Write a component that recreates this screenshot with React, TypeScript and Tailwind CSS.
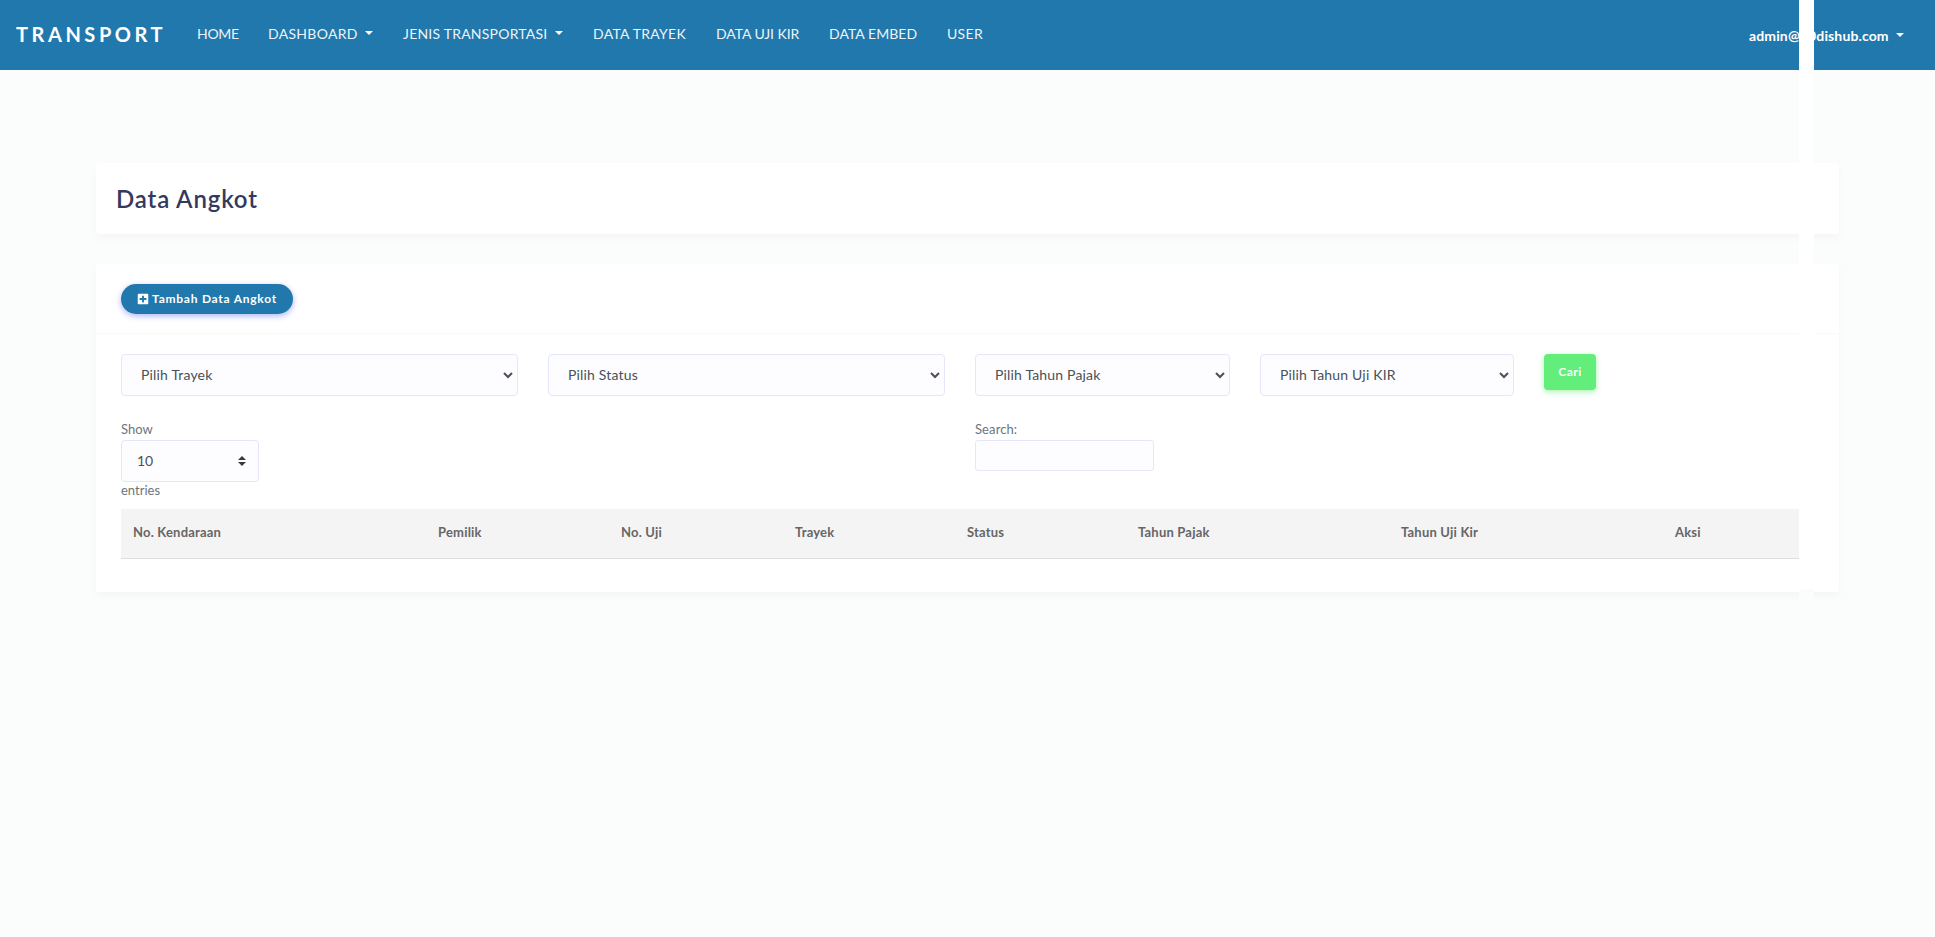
import { FaPlusSquare } from "react-icons/fa"

const navItems = [
  { label: "HOME", className: "w-[41px] mr-[30px] tracking-[-0.3px]" },
  { label: "DASHBOARD", className: "w-[105px] mr-[30px] tracking-[0.3px]", caret: true },
  { label: "JENIS TRANSPORTASI", className: "w-[160px] mr-[30px] tracking-[0.22px]", caret: true },
  { label: "DATA TRAYEK", className: "w-[93px] mr-[30px] tracking-[0.28px]" },
  { label: "DATA UJI KIR", className: "w-[83px] mr-[30px] tracking-[-0.07px]" },
  { label: "DATA EMBED", className: "w-[88px] mr-[30px] tracking-[0.05px]" },
  { label: "USER", className: "w-[37px] tracking-[0.3px]" },
]

const filters = [
  { label: "Pilih Trayek", className: "w-[397px]" },
  { label: "Pilih Status", className: "w-[397px]" },
  { label: "Pilih Tahun Pajak", className: "w-[255px]" },
  { label: "Pilih Tahun Uji KIR", className: "w-[254px]" },
]

const columns = [
  { label: "No. Kendaraan", className: "w-[305px]" },
  { label: "Pemilik", className: "w-[183px]" },
  { label: "No. Uji", className: "w-[174px]" },
  { label: "Trayek", className: "w-[172px]" },
  { label: "Status", className: "w-[171px]" },
  { label: "Tahun Pajak", className: "w-[263px]" },
  { label: "Tahun Uji Kir", className: "w-[274px]" },
  { label: "Aksi", className: "w-[136px]" },
]

function Caret() {
  return <span className="mb-[3px] border-x-4 border-t-4 border-x-transparent border-t-white" />
}

function Navbar() {
  return (
    <nav className="flex h-[70px] items-start bg-[#2078ad] pl-4 text-white">
      <div className="mt-[19px] w-[181px] text-[20px] leading-[30px] font-bold tracking-[3.55px]">TRANSPORT</div>
      <div className="flex pt-[23px] text-[14px] leading-[22px]">
        {navItems.map(item => (
          <a
            key={item.label}
            href="#"
            className={`flex items-center justify-between whitespace-nowrap text-[#edf4f8] ${item.className}`}
          >
            {item.label}
            {item.caret && <Caret />}
          </a>
        ))}
      </div>
      <a
        href="#"
        className="mt-[25px] mr-[31px] ml-auto flex w-[155px] items-center justify-between text-[14px] leading-[22px] font-bold tracking-[0.13px]"
      >
        admin@00dishub.com
        <Caret />
      </a>
    </nav>
  )
}

function FilterSelect({ label, className }: { label: string, className: string }) {
  return (
    <div
      className={`flex h-[42px] items-center justify-between rounded-[4px] border border-[#e4e6fc] bg-[#fdfdff] pr-[4px] pl-[19px] text-[14px] text-[#495057] ${className}`}
    >
      <span className="pb-[2px] tracking-[0.17px]">{label}</span>
      <svg width="10" height="7" viewBox="0 0 10 7" fill="none" stroke="#495057" strokeWidth="2">
        <path d="M1 1l4 4 4-4" />
      </svg>
    </div>
  )
}

export default function App() {
  return (
    <div className="relative h-[937px] overflow-hidden bg-[#fbfdfc] font-['Lato',sans-serif]">
      <Navbar />

      <main className="mx-24 mt-[93px]">
        <div className="h-[71px] rounded-[3px] bg-white px-5 pt-[19px] shadow-[0_4px_8px_rgba(0,0,0,0.03)]">
          <h1 className="text-[24px] leading-[34px] font-semibold tracking-[0.85px] text-[#34395e]">Data Angkot</h1>
        </div>

        <div className="mt-[30px] h-[328px] rounded-[3px] bg-white shadow-[0_4px_8px_rgba(0,0,0,0.03)]">
          <div className="flex h-[70px] items-start border-b border-[#f9f9f9] px-[25px] pt-5">
            <button className="flex h-[30px] w-[172px] items-center justify-center gap-[3px] rounded-full bg-[#2078ad] text-[12px] font-bold tracking-[0.75px] whitespace-nowrap text-white shadow-[0_2px_6px_#acb5f6]">
              <FaPlusSquare className="size-3" />
              Tambah Data Angkot
            </button>
          </div>

          <div className="px-[25px] pt-5">
            <div className="flex gap-[30px]">
              {filters.map(filter => (
                <FilterSelect key={filter.label} {...filter} />
              ))}
              <button className="h-9 w-[52px] rounded-[4px] bg-[#63ed7a] text-[12px] font-bold tracking-[0.5px] text-white shadow-[0_2px_6px_#a8f5b4]">
                Cari
              </button>
            </div>

            <div className="mt-[23px] flex h-[90px] text-[13px] leading-5 text-[#6c757d]">
              <div className="w-[854px]">
                <div>Show</div>
                <div className="mt-px flex h-[42px] w-[138px] items-center justify-between rounded-[4px] border border-[#e4e6fc] bg-[#fdfdff] pr-3 pl-[15px] text-[14px] text-[#495057]">
                  10
                  <svg width="8" height="10" viewBox="0 0 8 10" fill="#343a40">
                    <path d="M4 0L8 4H0zM4 10L0 6h8z" />
                  </svg>
                </div>
                <div className="-mt-[2px]">entries</div>
              </div>
              <div>
                <div className="tracking-[0.1px]">Search:</div>
                <input className="mt-px block h-[31px] w-[179px] rounded-[3px] border border-[#e4e6fc] bg-[#fdfdff]" />
              </div>
            </div>

            <table className="w-[1678px] table-fixed text-left text-[13px] tracking-[0.2px] text-[#666]">
              <thead>
                <tr className="h-[49px] border-b border-[#dcdddf] bg-[#f4f4f4]">
                  {columns.map(column => (
                    <th key={column.label} className={`pb-[2px] pl-3 font-bold ${column.className}`}>
                      {column.label}
                    </th>
                  ))}
                </tr>
              </thead>
            </table>
          </div>
        </div>
      </main>

      {/* vertical strip over the page, fading into the background below the card */}
      <div className="absolute top-0 left-[1799px] h-[589px] w-[15px] bg-white" />
      <div className="absolute top-[589px] left-[1799px] h-[348px] w-[15px] bg-[#fbfdfc]" />
    </div>
  )
}
